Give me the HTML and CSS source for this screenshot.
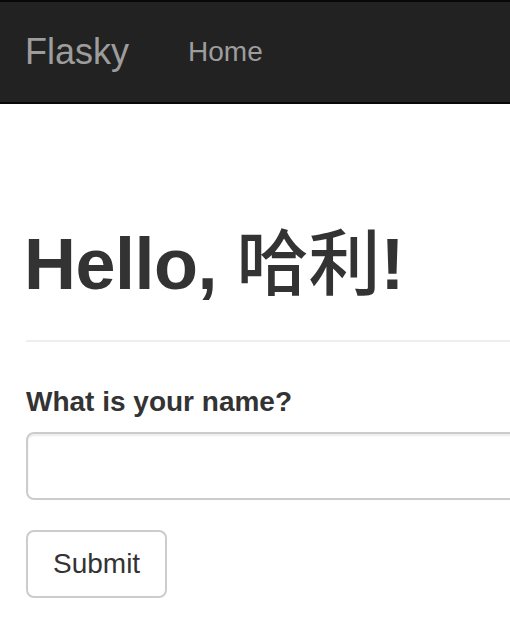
FILE: index.html
```html
<!DOCTYPE html>
<html lang="zh">
<head>
<meta charset="utf-8">
<title>Flasky</title>
<link rel="stylesheet" href="styles.css">
</head>
<body>
<nav class="navbar">
  <a class="brand" href="#">Flasky</a>
  <a class="nav-link" href="#">Home</a>
</nav>
<main class="container">
  <div class="page-header">
    <h1>Hello, <span class="cjk">哈利</span>!</h1>
  </div>
  <form class="form">
    <div class="form-group">
      <label class="label" for="name">What is your name?</label>
      <input class="input" id="name" type="text">
    </div>
    <button class="btn" type="submit">Submit</button>
  </form>
</main>
</body>
</html>
```
FILE: styles.css
```css
html, body {
  margin: 0;
  padding: 0;
  overflow: hidden;
  background: #fff;
}
body {
  font-family: "Liberation Sans", Arial, "Noto Sans CJK SC", sans-serif;
  color: #333;
  width: 510px;
  height: 618px;
}
.navbar {
  display: flex;
  align-items: flex-start;
  background: #222;
  border-top: 2px solid #080808;
  border-bottom: 2px solid #080808;
  height: 100px;
  padding-left: 25px;
}
.brand {
  font-size: 36px;
  line-height: 40px;
  padding: 30px 0;
  color: #9d9d9d;
  text-decoration: none;
  margin-right: 59px;
}
.nav-link {
  font-size: 28px;
  line-height: 40px;
  padding: 30px 0;
  color: #9d9d9d;
  text-decoration: none;
}
.container {
  padding-left: 26px;
  overflow: hidden;
}
.page-header {
  margin: 114px 0 40px;
  padding-bottom: 18px;
  border-bottom: 2px solid #eee;
}
.page-header h1 {
  margin: 0 0 18px -2px;
  font-size: 72px;
  font-weight: bold;
  line-height: 1.1;
  letter-spacing: -0.5px;
}
.cjk {
  font-family: "Noto Sans CJK SC", sans-serif;
  font-weight: 500;
  letter-spacing: 0;
}
.form-group {
  display: flex;
  flex-direction: column;
  align-items: flex-start;
  margin-bottom: 30px;
}
.label {
  font-size: 28px;
  line-height: 40px;
  font-weight: bold;
  margin-bottom: 10px;
}
.input {
  box-sizing: border-box;
  width: 600px;
  height: 68px;
  border: 2px solid #ccc;
  border-radius: 8px;
  box-shadow: inset 0 2px 2px rgba(0,0,0,.075);
  font-size: 28px;
  padding: 12px 24px;
  margin: 0;
}
.btn {
  font-family: "Liberation Sans", Arial, sans-serif;
  font-size: 28px;
  line-height: 40px;
  padding: 12px 25px;
  color: #333;
  background: #fff;
  border: 2px solid #ccc;
  border-radius: 8px;
  margin: 0;
}
```
